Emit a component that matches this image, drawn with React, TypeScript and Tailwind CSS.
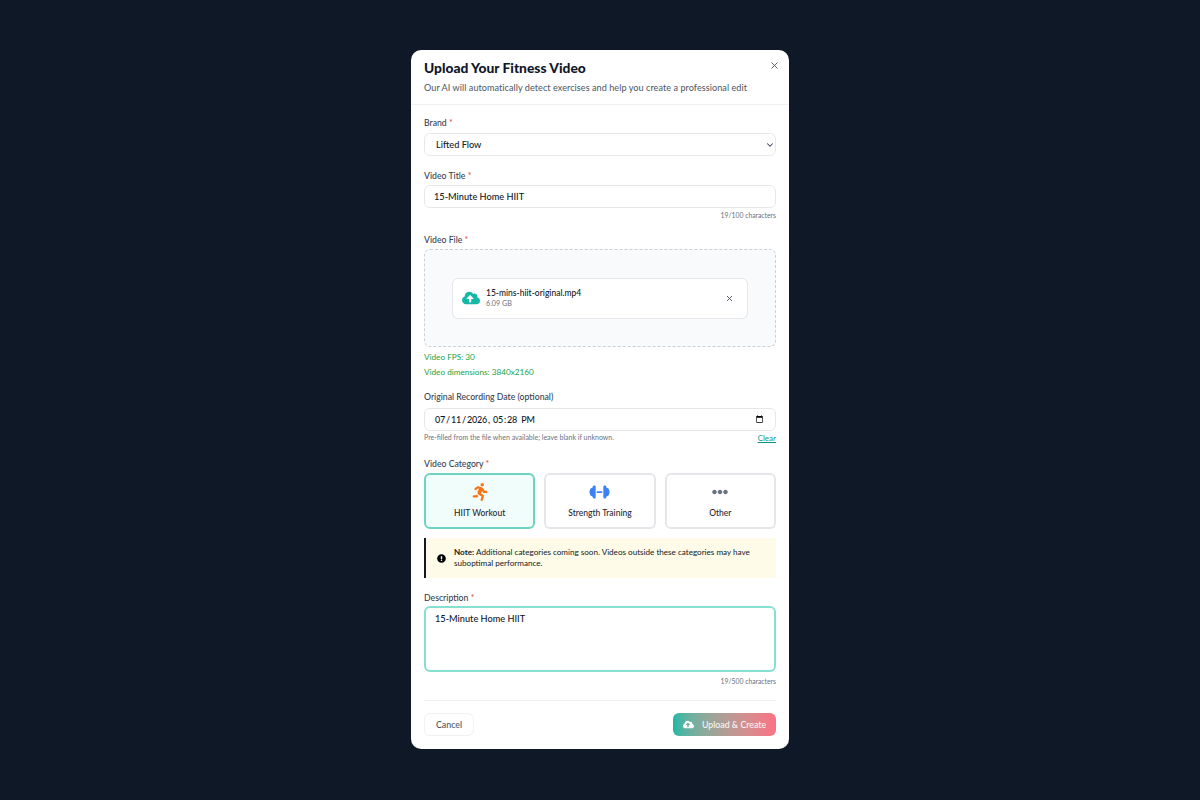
import { FaCloudUploadAlt, FaEllipsisH, FaExclamationCircle, FaRunning } from "react-icons/fa";
import { ChevronDown, X } from "lucide-react";

function Dumbbell() {
  return (
    <svg viewBox="0 0 22 16" preserveAspectRatio="none" className="w-[21px] h-[14px] text-[#3b82f6]" fill="currentColor">
      <path d="M5.5 0.5 C6.6 0.5 7 1.2 7 2 V14 C7 14.8 6.6 15.5 5.5 15.5 C4.6 15.5 4.2 15 4 14.4 L3.6 13 C2 12.8 1.3 11.8 1 10.6 L0.6 9.2 C0.4 8.4 0.4 7.6 0.6 6.8 L1 5.4 C1.3 4.2 2 3.2 3.6 3 L4 1.6 C4.2 1 4.6 0.5 5.5 0.5 Z" />
      <path d="M16.5 0.5 C15.4 0.5 15 1.2 15 2 V14 C15 14.8 15.4 15.5 16.5 15.5 C17.4 15.5 17.8 15 18 14.4 L18.4 13 C20 12.8 20.7 11.8 21 10.6 L21.4 9.2 C21.6 8.4 21.6 7.6 21.4 6.8 L21 5.4 C20.7 4.2 20 3.2 18.4 3 L18 1.6 C17.8 1 17.4 0.5 16.5 0.5 Z" />
      <rect x="8" y="7" width="6" height="2.2" rx="0.5" />
    </svg>
  );
}

const categories = [
  { label: "HIIT Workout", icon: <FaRunning className="size-[18px] text-[#f97316]" />, active: true },
  { label: "Strength Training", icon: <Dumbbell />, active: false },
  { label: "Other", icon: <FaEllipsisH className="size-[16px] text-[#6b7280]" />, active: false },
];

function Label({ text, required }: { text: string; required?: boolean }) {
  return (
    <label className="block text-[8.7px] leading-[14px] font-medium text-[#374151]">
      {text}
      {required && <span className="text-[#ef4444]"> *</span>}
    </label>
  );
}

export default function App() {
  return (
    <main className="h-[800px] w-full bg-[#0e1827] flex justify-center pt-[50px] font-['Lato',sans-serif]">
      <div className="relative w-[378px] h-[699px] bg-white rounded-[10px] overflow-hidden">
        <button className="absolute top-[10px] right-[9px] text-[#4b5563]">
          <X className="size-[11px]" strokeWidth={2} />
        </button>

        <div className="h-[55px] px-[13px] pt-[8px] border-b border-[#f0f2f5]">
          <h2 className="text-[13.8px] leading-[20px] font-black text-[#0f172a]">
            Upload Your Fitness Video
          </h2>
          <p className="mt-[2px] text-[9.1px] leading-[16px] text-[#4b5563] tracking-[0.05px]">
            Our AI will automatically detect exercises and help you create a professional edit
          </p>
        </div>

        <div className="px-[13px] pt-[11px]">
          <Label text="Brand" required />
          <div className="relative mt-[3px]">
            <select
              defaultValue="lifted"
              className="block w-full h-[23px] pl-[11px] bg-white border border-[#e5e7eb] rounded-[6px] text-[9.2px] font-medium text-[#111827] appearance-none"
            >
              <option value="lifted">Lifted Flow</option>
            </select>
            <ChevronDown className="absolute right-[1px] top-[7px] size-[10px] text-[#374151]" strokeWidth={2.5} />
          </div>

          <div className="mt-[13px]">
            <Label text="Video Title" required />
          </div>
          <input
            defaultValue="15-Minute Home HIIT"
            className="mt-[2px] block w-full h-[23px] px-[9px] border border-[#e5e7eb] rounded-[6px] text-[9.2px] font-medium text-[#111827]"
          />
          <p className="mt-[2px] text-right text-[6.8px] leading-[10px] text-[#6b7280]">19/100 characters</p>

          <div className="mt-[13px]">
            <Label text="Video File" required />
          </div>
          <div className="mt-[2px] h-[98px] border border-dashed border-[#cbd0d8] rounded-[6px] bg-[#f9fafb] flex items-center justify-center">
            <div className="w-[296px] h-[41px] bg-white border border-[#e5e7eb] rounded-[6px] flex items-center pl-[9px] pr-[13px]">
              <FaCloudUploadAlt className="size-[18px] text-[#14b8a6]" />
              <div className="ml-[6px] flex-1">
                <p className="text-[8.5px] leading-[12px] font-medium text-[#111827]">15-mins-hiit-original.mp4</p>
                <p className="text-[7.2px] leading-[10px] text-[#6b7280]">6.09 GB</p>
              </div>
              <X className="size-[9px] text-[#4b5563]" strokeWidth={2.5} />
            </div>
          </div>

          <p className="mt-[3px] text-[8.2px] leading-[14px] text-[#16a34a]">Video FPS: 30</p>
          <p className="mt-[1px] text-[8.2px] leading-[14px] text-[#16a34a]">Video dimensions: 3840x2160</p>

          <div className="mt-[11px]">
            <Label text="Original Recording Date (optional)" />
          </div>
          <input
            type="datetime-local"
            defaultValue="2026-07-11T17:28"
            className="mt-[4px] block w-full h-[23px] px-[9px] border border-[#e5e7eb] rounded-[6px] text-[9px] font-medium tracking-[-0.2px] text-[#111827]"
          />
          <div className="h-[13px] flex justify-between items-start">
            <p className="mt-[1px] text-[7px] leading-[10px] text-[#6b7280]">
              Pre-filled from the file when available; leave blank if unknown.
            </p>
            <a className="mt-[1px] text-[8px] leading-[12px] text-[#0d9488] underline">Clear</a>
          </div>

          <div className="mt-[13px]">
            <Label text="Video Category" required />
          </div>
          <div className="mt-[2px] grid grid-cols-3 gap-[9px]">
            {categories.map((c) => (
              <div
                key={c.label}
                className={
                  c.active
                    ? "h-[56px] rounded-[6px] border-2 border-[#6ed3c4] bg-[#f0fdfa] flex flex-col items-center"
                    : "h-[56px] rounded-[6px] border-2 border-[#e5e7eb] bg-white flex flex-col items-center"
                }
              >
                <div className="h-[20px] mt-[7px] flex items-center justify-center">{c.icon}</div>
                <span className="mt-[4px] text-[8.5px] leading-[14px] font-medium text-[#1f2937]">{c.label}</span>
              </div>
            ))}
          </div>

          <div className="mt-[9px] h-[40px] border-l-2 border-[#111827] bg-[#fefce8] flex items-center pl-[11px] pr-[10px]">
            <FaExclamationCircle className="size-[9px] text-black shrink-0" />
            <p className="ml-[8px] text-[8.1px] leading-[11.5px] text-[#111827]">
              <span className="font-bold">Note: </span>
              Additional categories coming soon. Videos outside these categories may have suboptimal performance.
            </p>
          </div>

          <div className="mt-[13px]">
            <Label text="Description" required />
          </div>
          <textarea
            defaultValue="15-Minute Home HIIT"
            className="mt-[1px] block w-full h-[66px] px-[9px] py-[4px] border-2 border-[#86e0d2] rounded-[6px] text-[9.2px] font-medium leading-[14px] text-[#111827] outline-none resize-none"
          />
          <p className="mt-[4px] text-right text-[6.8px] leading-[10px] text-[#6b7280]">19/500 characters</p>

          <div className="mt-[14px] pt-[12px] border-t border-[#f0f2f5] flex justify-between">
            <button className="w-[50px] h-[23px] rounded-[6px] border border-[#f0f2f5] bg-white text-[8.8px] font-medium text-[#4b5563]">
              Cancel
            </button>
            <button className="w-[103px] h-[23px] rounded-[6px] bg-gradient-to-r from-[#14b8a6] to-[#fb7185] flex items-center justify-center gap-[8px] text-[8.8px] font-medium text-white/90">
              <FaCloudUploadAlt className="size-[11px] text-white" />
              Upload &amp; Create
            </button>
          </div>
        </div>
      </div>
    </main>
  );
}
